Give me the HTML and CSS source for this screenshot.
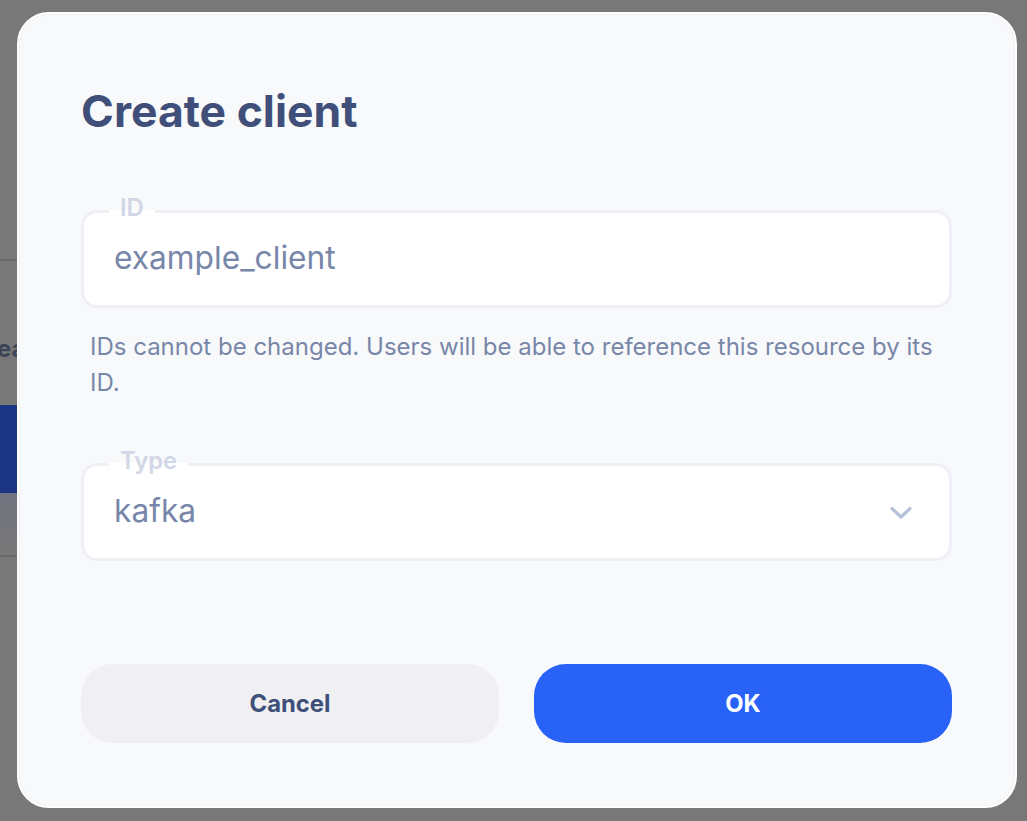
FILE: index.html
```html
<!DOCTYPE html>
<html lang="en">
<head>
<meta charset="utf-8">
<title>Create client</title>
<link rel="stylesheet" href="styles.css">
</head>
<body>
<div class="backdrop">
  <div class="bg-line bg-line-top"></div>
  <div class="bg-text">ea</div>
  <div class="bg-button"></div>
  <div class="bg-fade"></div>
  <div class="bg-line bg-line-bottom"></div>
</div>
<div class="modal">
  <h1 class="title">Create client</h1>
  <fieldset class="field field-id">
    <legend class="field-label">ID</legend>
    <div class="field-value">example_client</div>
  </fieldset>
  <p class="help">IDs cannot be changed. Users will be able to reference this resource by its ID.</p>
  <fieldset class="field field-type">
    <legend class="field-label">Type</legend>
    <div class="field-value select-value">
      <span>kafka</span>
      <svg class="chevron" width="22" height="14" viewBox="0 0 22 14" aria-hidden="true"><path d="M2 2.5 L11 11 L20 2.5" fill="none" stroke="#b7c1da" stroke-width="3.2" stroke-linecap="round" stroke-linejoin="round"/></svg>
    </div>
  </fieldset>
  <div class="actions">
    <button class="btn btn-cancel">Cancel</button>
    <button class="btn btn-ok">OK</button>
  </div>
</div>
</body>
</html>
```

FILE: styles.css
```css
html, body {
  margin: 0;
  padding: 0;
}
body {
  width: 1027px;
  height: 821px;
  overflow: hidden;
  background: #787878;
  font-family: Inter, "Noto Sans", sans-serif;
  position: relative;
}
.backdrop {
  position: absolute;
  inset: 0;
  z-index: 0;
}
.bg-line {
  position: absolute;
  left: 0;
  width: 60px;
  height: 2px;
  background: #6b6b6b;
}
.bg-line-top { top: 259px; }
.bg-line-bottom { top: 555px; }
.bg-text {
  position: absolute;
  left: -3px;
  top: 334px;
  font-size: 24px;
  font-weight: 700;
  color: #3d4459;
}
.bg-button {
  position: absolute;
  left: 0;
  top: 405px;
  width: 60px;
  height: 88px;
  background: #1c3484;
}
.bg-fade {
  position: absolute;
  left: 0;
  top: 493px;
  width: 60px;
  height: 62px;
  background: linear-gradient(#70737f, #787878);
}
.modal {
  position: relative;
  z-index: 1;
  box-sizing: border-box;
  margin: 12px 0 0 17px;
  width: 1000px;
  height: 796px;
  border: 2px solid #ffffff;
  border-radius: 32px;
  background: #f8f9fb;
  box-shadow: inset 0 0 0 1px #f1f2f5;
  padding: 73px 63px 0 62px;
  display: flex;
  flex-direction: column;
}
.title {
  margin: 0;
  font-size: 44.5px;
  line-height: 48px;
  font-weight: 700;
  color: #3f4f7a;
  letter-spacing: 0;
}
.field {
  margin: 0;
  padding: 0;
  border: 3px solid #eef0f5;
  border-radius: 16px;
  background: #ffffff;
  min-width: 0;
}
.field-id { margin-top: 60px; }
.field-type { margin-top: 48px; }
.field-label {
  margin-left: 25px;
  padding: 0 11px 6px;
  font-size: 23.8px;
  line-height: 26px;
  font-weight: 600;
  color: #d1d7e6;
}
.field-value {
  padding: 11px 30px 26.5px;
  font-size: 31.7px;
  line-height: 40px;
  color: #7887a9;
}
.select-value {
  display: flex;
  align-items: center;
  justify-content: space-between;
  padding-right: 37px;
}
.chevron {
  display: block;
  margin-top: 4px;
}
.help {
  margin: 21.5px 0 0;
  padding-left: 9px;
  font-size: 24px;
  line-height: 35.5px;
  color: #7887a9;
}
.actions {
  margin-top: 103px;
  display: flex;
  gap: 35px;
}
.btn {
  flex: 1;
  height: 79px;
  border: none;
  border-radius: 32px;
  font-family: Inter, "Noto Sans", sans-serif;
  font-size: 23.8px;
  font-weight: 700;
}
.btn-cancel {
  background: #f0f0f3;
  color: #3e4f7a;
}
.btn-ok {
  background: #2962f6;
  color: #ffffff;
}
```
